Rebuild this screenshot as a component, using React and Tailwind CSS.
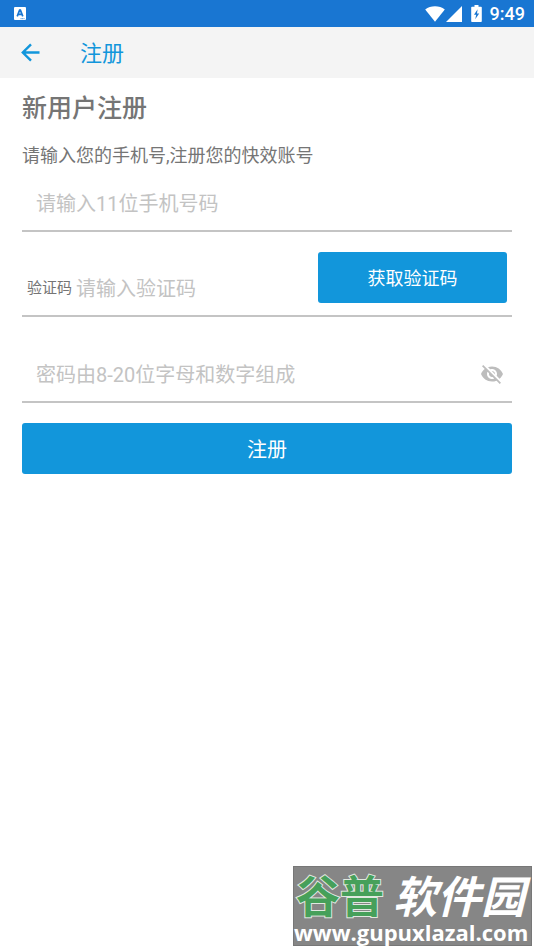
import React, { useState } from 'react';

function StatusBar() {
  return (
    <div className="h-[27px] bg-[#1976d2] flex items-center justify-between pl-[14px] pr-[9px] text-white">
      <svg width="12" height="13" viewBox="0 0 12 13" aria-hidden="true">
        <rect width="12" height="13" rx="1" fill="#fff" />
        <path d="M3.2 9.400 5.600 3.200h.8L8.800 9.400M4.200 7.400h3.600" fill="none" stroke="#1976d2" strokeWidth="1.700" />
        <path d="M6.500 11.700h4" stroke="#1976d2" strokeWidth=".8" strokeDasharray="1.200 .4" />
      </svg>
      <div className="flex items-center">
        <svg width="20" height="16" viewBox="0 0 20 16" fill="currentColor" aria-hidden="true">
          <path d="M10 15.800.2 3.400C3 1.200 6.300.2 10 .2s7 1 9.800 3.200z" />
        </svg>
        <svg className="ml-[1px]" width="16" height="16" viewBox="0 0 16 16" fill="currentColor" aria-hidden="true">
          <path d="M16 0v16H0z" />
        </svg>
        <svg className="ml-[9px]" width="11" height="17" viewBox="0 0 11 17" aria-hidden="true">
          <path d="M3.500 0h4v1.800h2.500q.8 0 .8.800v13.600q0 .8-.8.800H1q-.8 0-.8-.8V2.600q0-.8.800-.8h2.500z" fill="#fff" />
          <path d="M6.600 4.200 3 9.800h2.200L4.200 14.200 8.200 8.400H6z" fill="#1976d2" />
        </svg>
        <span className="ml-[8px] text-[18px] leading-[27px] font-medium">9:49</span>
      </div>
    </div>
  );
}

function AppBar() {
  return (
    <header className="h-[51px] bg-[#f4f4f4] flex items-center pl-[19px] text-[#1296db]">
      <button type="button" aria-label="返回" className="w-[24px] h-[24px]">
        <svg width="24" height="24" viewBox="0 0 24 24" fill="none" stroke="currentColor" strokeWidth="2.400" aria-hidden="true">
          <path d="M20.500 11.500H4M12 3.300 3.800 11.500l8.200 8.200" />
        </svg>
      </button>
      <h1 className="ml-[37px] pt-[2px] text-[22px] leading-[32px]">注册</h1>
    </header>
  );
}

function EyeOffIcon() {
  return (
    <svg width="24" height="24" viewBox="0 0 24 24" fill="currentColor" aria-hidden="true">
      <path d="M12 7c2.760 0 5 2.240 5 5 0 .65-.13 1.260-.36 1.830l2.920 2.920c1.510-1.260 2.700-2.890 3.430-4.750-1.730-4.390-6-7.500-11-7.500-1.400 0-2.740.25-3.980.7l2.160 2.160C10.740 7.130 11.350 7 12 7zM2 4.270l2.280 2.280.46.46C3.080 8.300 1.780 10.020 1 12c1.730 4.390 6 7.500 11 7.500 1.550 0 3.030-.3 4.380-.84l.42.42L19.730 22 21 20.730 3.270 3 2 4.270zM7.530 9.800l1.550 1.550c-.05.21-.08.43-.08.65 0 1.660 1.340 3 3 3 .22 0 .44-.03.65-.08l1.550 1.550c-.67.33-1.410.53-2.200.53-2.760 0-5-2.240-5-5 0-.79.2-1.530.53-2.200zm4.310-.78 3.150 3.150.02-.16c0-1.660-1.340-3-3-3l-.17.01z" />
    </svg>
  );
}

function Watermark() {
  return (
    <div className="absolute right-[2px] bottom-[4px] w-[239px] h-[80px] bg-[#868686] border border-[#777] text-white whitespace-nowrap">
      <div className="flex justify-between pl-[2px] pr-[6px] pt-[8px] text-[44px] leading-[46px] font-bold">
        <span className="text-[#46a05a] [-webkit-text-stroke:2px_#e0e8e0] [paint-order:stroke_fill]">谷普</span>
        <span className="italic">软件园</span>
      </div>
      <div className="text-[22px] leading-[22px] font-bold font-['Open_Sans','Noto_Sans',sans-serif]">
        www.gupuxlazal.com
      </div>
    </div>
  );
}

function App() {
  const [phone, setPhone] = useState('');
  const [code, setCode] = useState('');
  const [password, setPassword] = useState('');
  const [showPassword, setShowPassword] = useState(false);

  return (
    <div className="relative min-h-screen bg-white font-[Roboto,'Noto_Sans_CJK_SC',sans-serif]">
      <StatusBar />
      <AppBar />

      <main className="px-[22px] pt-[13px] text-[#757575]">
        <h2 className="text-[25px] leading-[36px] font-medium">新用户注册</h2>
        <p className="mt-[15px] text-[18px] leading-[28px]">请输入您的手机号,注册您的快效账号</p>

        <form onSubmit={(e) => e.preventDefault()}>
          <div className="h-[62px] flex items-end px-[14px] pb-[10px] border-b-2 border-[#c4c4c4]">
            <input
              type="tel"
              aria-label="手机号"
              value={phone}
              onChange={(e) => setPhone(e.target.value)}
              placeholder="请输入11位手机号码"
              className="w-full h-[32px] text-[20px] outline-none placeholder:text-[#c3c3c3]"
            />
          </div>

          <div className="h-[85px] flex items-end px-[5px] border-b-2 border-[#c4c4c4]">
            <label htmlFor="code" className="pb-[11px] text-[15px] leading-[32px] shrink-0">验证码</label>
            <input
              id="code"
              type="text"
              value={code}
              onChange={(e) => setCode(e.target.value)}
              placeholder="请输入验证码"
              className="flex-1 min-w-0 ml-[4px] mb-[10px] h-[32px] text-[20px] outline-none placeholder:text-[#c3c3c3]"
            />
            <button
              type="button"
              className="w-[189px] h-[51px] mb-[12px] pt-[2px] shrink-0 rounded-[3px] bg-[#1296db] text-white text-[18px]"
            >
              获取验证码
            </button>
          </div>

          <div className="h-[86px] flex items-end pl-[14px] pr-[8px] pb-[10px] border-b-2 border-[#c4c4c4]">
            <input
              type={showPassword ? 'text' : 'password'}
              aria-label="密码"
              value={password}
              onChange={(e) => setPassword(e.target.value)}
              placeholder="密码由8-20位字母和数字组成"
              className="flex-1 min-w-0 h-[32px] text-[20px] outline-none placeholder:text-[#c3c3c3]"
            />
            <button
              type="button"
              aria-label="显示密码"
              onClick={() => setShowPassword(!showPassword)}
              className="h-[34px] flex items-center text-[#bdbdbd]"
            >
              <EyeOffIcon />
            </button>
          </div>

          <button
            type="submit"
            className="mt-[20px] pt-[2px] w-full h-[51px] rounded-[3px] bg-[#1296db] text-white text-[20px]"
          >
            注册
          </button>
        </form>
      </main>

      <Watermark />
    </div>
  );
}

export default App;
